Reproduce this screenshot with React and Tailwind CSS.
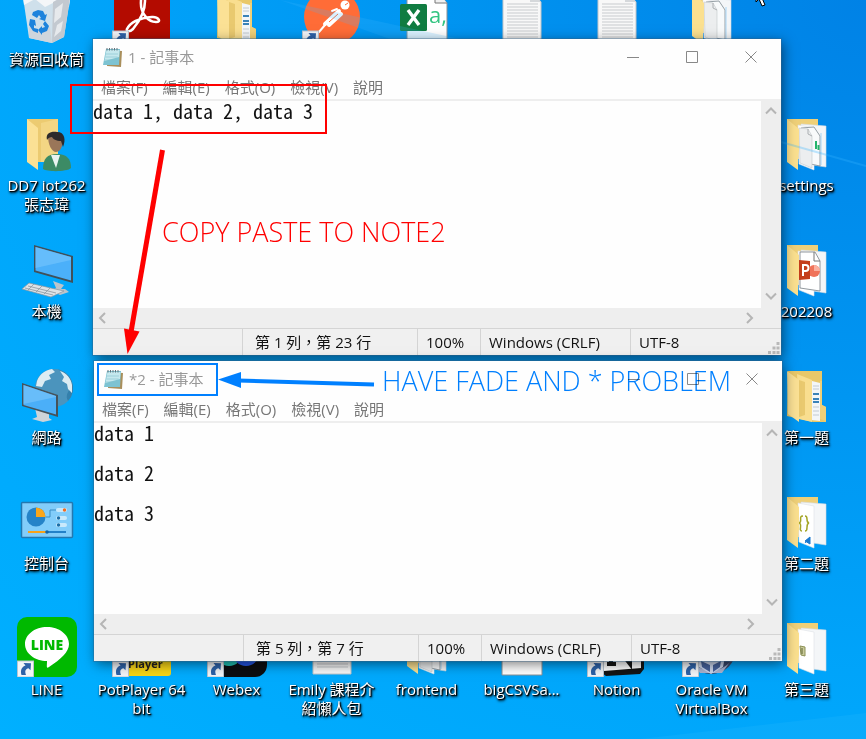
import React from "react";

const UI = "font-['Open_Sans','Noto_Sans_CJK_TC',sans-serif]";

/* ---------- desktop icon artwork, all on a 60 x 60 canvas ---------- */

function Shortcut() {
  return (
    <g>
      <rect x="0.5" y="44" width="16" height="16" fill="#f3f5f8" stroke="#b9c4d0" />
      <path d="M4.500 58c-1.500-5 .5-8.500 4-9.500l-2-2.500 7.500.3-.5 7-2-2c-3 .7-4 2.700-2.500 6.700z" fill="#2e62a8" />
    </g>
  );
}

function RecycleBin() {
  return (
    <g>
      <path d="M5 3 54 5 47 50 35 56 12 51z" fill="#dfe4ea" opacity=".93" />
      <path d="M5 3 54 5 52 20 40 14 28 20 18 12 7 18z" fill="#f4f6f8" />
      <path d="M36 15 35 56 47 50 54 5z" fill="#c3c9d0" />
      <path d="M38 22 46 16 44 30 37 36zM40 38 46 34 44 44 37 50z" fill="#e6e9ec" />
      <path d="M12 40 22 44 33 40 35 56 12 51z" fill="#cfd5dc" />
      <g fill="#1d83dc">
        <path d="M16 25l5-2 5 1 2 4 2-1-2 7-6-2 2-1-2-3-2 3-5-3z" />
        <path d="M13 32l5 1 1 6-2-1v3l4 1v4l-5-2-4-6z" />
        <path d="M28 34l4 5-2 5-5 2v2l-4-5 4-4v2l3-1-2-3z" />
      </g>
    </g>
  );
}

function Acrobat() {
  return (
    <g>
      <rect x="2" y="1" width="56" height="58" rx="4" fill="#b30b00" />
      <path d="M15 42c4-8 14-11 25-12 6-.5 10 5 4 5-8 0-16-9-15-21 0-5 4-5 4 0 0 11-7 22-12 28-3 3-7 3-6 0z" fill="none" stroke="#fff" strokeWidth="2.600" />
      <Shortcut />
    </g>
  );
}

function FolderFiled() {
  return (
    <g>
      <path d="M11 6h34v34l4 2v15H36L10 51z" fill="#e9c869" />
      <path d="M35 16l8 2v38l-9-1z" fill="#f3f6f8" />
      <path d="M36 21h6M36 24h6M36 42h6M36 46h6M36 50h6" stroke="#c2cad2" />
      <path d="M36 29h6M36 34h6M36 37h6" stroke="#3a82b8" strokeWidth="2" />
      <path d="M45 16v24l4 2v14l-6-2V16z" fill="#f0d078" />
      <path d="M20 9l15 6v42l-13-3z" fill="#f9de8f" />
      <path d="M22 15l6 2v33l-6 2z" fill="#e9c96f" />
      <path d="M10 6l12 9v42L11 49z" fill="#fbe195" />
    </g>
  );
}

function FolderOpen({ children }) {
  return (
    <g>
      <path d="M10 6h31v40H10z" fill="#efd078" />
      <path d="M24 11l25 2v41l-26-4z" fill="#f4f6f8" stroke="#d3dae1" strokeWidth=".6" />
      <path d="M21 12l16 3v42l-15-6z" fill="#fff" stroke="#dde1e5" strokeWidth=".6" />
      {children}
      <path d="M10 6l12 10v22l-1 5v14L10 49z" fill="#fbe08f" />
    </g>
  );
}

function FolderDocs({ green }) {
  return (
    <FolderOpen>
      <path d="M24 15l13-1 6 9v30l-19-4z" fill="#f8fafb" stroke="#7e8990" strokeWidth=".8" />
      <path d="M22 15l9 1 4 7v32l-12-5z" fill="#eceeef" stroke="#c9cdd0" strokeWidth=".7" />
      <path d="M31 16v5l4 2" fill="none" stroke="#abafb2" />
      <path d="M44 20v32" stroke="#a8d5f5" />
      {green && <path d="M39 28v8M41.500 32v5" stroke="#25b46b" strokeWidth="2" />}
    </FolderOpen>
  );
}

function Postman() {
  return (
    <g>
      <circle cx="30" cy="30" r="28" fill="#ff6c37" />
      <g fill="none" stroke="#fff" strokeLinecap="round">
        <circle cx="43" cy="18" r="4.500" fill="#fff" stroke="none" />
        <path d="M37 24 23 37M39 27 27 38" strokeWidth="4" />
        <path d="M23 38 17 45M35 22 30 24" strokeWidth="2" />
      </g>
      <path d="M36 27l-9 8M43 18l3-2" stroke="#ff6c37" />
      <Shortcut />
    </g>
  );
}

function BlankFile() {
  return (
    <g>
      <path d="M10 2h28l12 14v42H10z" fill="#fff" stroke="#8b9095" />
      <path d="M38 2v14h12" fill="#f1f1f1" stroke="#777" />
    </g>
  );
}

function CsvFile() {
  return (
    <g>
      <BlankFile />
      <rect x="3" y="17" width="27" height="27" rx="1.500" fill="#107c41" />
      <path d="M11 23l11 15M22 23 11 38" stroke="#fff" strokeWidth="3.400" />
      <text x="32" y="36" fontSize="22" fontFamily="Open Sans" fill="#33c481">a,</text>
    </g>
  );
}

const TEXT_LINES = [17, 20, 23, 26, 29, 32, 35, 38, 41, 44, 47, 50];

function TextFile() {
  return (
    <g>
      <path d="M11 2h27l11 13v42H11z" fill="#f8f8f8" stroke="#c2c6ca" />
      <path d="M38 2v13h11z" fill="#d5d8db" />
      {TEXT_LINES.map((y) => (
        <path key={y} d={`M15 ${y}h31`} stroke="#c8cbce" />
      ))}
    </g>
  );
}

function UserFolder() {
  return (
    <g>
      <path d="M10 6h31v43H10z" fill="#eccb71" />
      <path d="M24 10l17-4v43H24z" fill="#f3d684" />
      <path d="M10 6l11 9v42L10 49z" fill="#fbe195" />
      <path d="M26 56c0-10 4-15 14-15s14 5 14 14c-4 4-24 4-28 1z" fill="#3c8b65" />
      <path d="M34 42l5 13 4-13z" fill="#e9f3f0" />
      <path d="M31 23c0-5 15-6 15 2 0 9-3 14-7 14s-8-7-8-16z" fill="#9a7659" />
      <path d="M30 27c-2-8 6-9 10-8 8 0 9 8 6 15l-2-6c-5 0-8-2-9-4-2 0-4 1-5 3z" fill="#2c2a2c" />
    </g>
  );
}

function ThisPc() {
  return (
    <g>
      <path d="M36 42l11 4-3 4h4l4 3-9 3-8-4 4-3z" fill="#bcc4cb" />
      <path d="M17 6l39 11v27L17 33z" fill="#415059" />
      <path d="M18.500 8 54 18v23.500L18.500 31.500z" fill="#4bb0fa" />
      <path d="M18.500 8 54 18v3L18.500 29z" fill="#77c6fd" opacity=".6" />
      <path d="M12 44l35 8-13 6L5 50z" fill="#dde2e6" stroke="#8b959d" strokeWidth=".7" />
      <path d="M11 47l28 7M8 49l28 7M17 45l-6 6M25 47l-6 6M33 49l-6 6" stroke="#8d979f" strokeWidth=".8" />
    </g>
  );
}

function Network() {
  return (
    <g>
      <circle cx="37" cy="23" r="19" fill="#4b94bd" />
      <path d="M37 4a19 19 0 0 1 14 32c-3-5 0-11 4-13C53 11 47 5 37 4z" fill="#3480ac" />
      <path d="M20 16c3-8 9-11 15-12l3 3-6 3 2 4-6 2-3 6-6-1zM43 6c7 2 11 8 12 14v8l-4-4-1-5-5-3 2-4z" fill="#dcecf3" />
      <path d="M18 43l14 6v4l3 2-9 2-11-3 5-2z" fill="#ced4d9" />
      <path d="M5 18l36 12v22L5 41z" fill="#46525a" />
      <path d="M6.500 20 39 31v18.500L6.500 40z" fill="#4baff8" />
      <path d="M6.500 20 39 31v1L6.500 39z" fill="#7bc6fb" opacity=".6" />
    </g>
  );
}

function ControlPanel() {
  return (
    <g>
      <rect x="4.500" y="11.500" width="51" height="35" rx="1" fill="#82cdfa" stroke="#2378b0" strokeWidth="1.500" />
      <circle cx="19" cy="26" r="9.500" fill="#2583c8" />
      <path d="M19 26V16.500a9.500 9.500 0 0 1 9.500 9.500z" fill="#fba61a" />
      <path d="M29 26h4v-7h6" fill="none" stroke="#3b8dc4" />
      <rect x="39" y="17" width="11" height="4" rx="2" fill="#c9e9fb" />
      <rect x="39" y="25" width="11" height="4" rx="2" fill="#c9e9fb" />
      <rect x="39" y="32" width="11" height="4" rx="2" fill="#c9e9fb" />
      <circle cx="47.500" cy="19" r="1.700" fill="#f36c21" />
      <circle cx="41.500" cy="27" r="1.700" fill="#1d6fa8" />
      <circle cx="41.500" cy="34" r="1.700" fill="#1d6fa8" />
      <path d="M11 41h19" stroke="#f6a21b" strokeWidth="2" />
      <path d="M30 41h19" stroke="#2381c8" strokeWidth="2" />
      <circle cx="30" cy="41" r="1.800" fill="#1866a5" />
    </g>
  );
}

function Line() {
  return (
    <g>
      <rect width="60" height="60" rx="10" fill="#00b900" />
      <path d="M30 10c12 0 22 7.500 22 17 0 8-8 15-20 23-3 2-2-1-2-6-12 0-22-7.500-22-17s10-17 22-17z" fill="#fff" />
      <text x="30" y="33" textAnchor="middle" fontSize="14" fontWeight="800" fontFamily="Open Sans" fill="#00b900">LINE</text>
      <Shortcut />
    </g>
  );
}

function PotPlayer() {
  return (
    <g>
      <rect x="2" y="2" width="57" height="57" rx="3" fill="#f8d516" />
      <text x="16" y="51" fontSize="11" fontWeight="700" fontFamily="Open Sans" fill="#222">Player</text>
      <Shortcut />
    </g>
  );
}

function Webex() {
  return (
    <g>
      <rect width="60" height="60" rx="12" fill="#0c0d10" />
      <circle cx="22" cy="36" r="13" fill="#20c4b6" />
      <circle cx="39" cy="36" r="13" fill="#2456e8" />
      <Shortcut />
    </g>
  );
}

function Notion() {
  return (
    <g>
      <path d="M8 4h42l7 8v40l-4 5-34 2-11-8z" fill="#141414" />
      <path d="M14 14h40v37l-37 3z" fill="#fff" />
      <path d="M20 47h9M24 25v22M26 25l17 22V25M38 26h9" stroke="#141414" strokeWidth="4" />
      <Shortcut />
    </g>
  );
}

function VirtualBox() {
  return (
    <g>
      <circle cx="29" cy="32" r="25" fill="#39496d" />
      <path d="M10 45c10 11 29 11 38 0l-8 11H18z" fill="#a9b2cf" />
      <path d="M14 34l15 7 15-7-3 16-12 7-12-7z" fill="#cbd6ec" />
      <path d="M19 44l9 4v7l-8-5zM39 44l-8 4v7l7-5z" fill="#47639c" />
      <Shortcut />
    </g>
  );
}

function PowerPointFolder() {
  return (
    <FolderOpen>
      <path d="M23 13h15l5 9v30l-20-3z" fill="#fff" stroke="#777f85" strokeWidth=".8" />
      <path d="M37 13v9h6" fill="none" stroke="#777" />
      <circle cx="37" cy="32" r="6" fill="#f0735a" />
      <path d="M37 32v-6a6 6 0 0 1 6 6z" fill="#fbb09f" />
      <path d="M22 21l11 1v18l-11 1z" fill="#c43e1c" />
      <path d="M26 37V26h2.500a3 3 0 0 1 0 6H26" fill="none" stroke="#fff" strokeWidth="2" />
    </FolderOpen>
  );
}

function CodeFolder() {
  return (
    <FolderOpen>
      <path d="M26 25c-5 0 0 6-4 7 4 1-1 8 3 8M28 25c4 0 0 6 4 7-4 1 0 8-4 8" fill="none" stroke="#a5a627" strokeWidth="1.500" />
      <path d="M33 46v7l-5-3zM33 46l-5 6" fill="#1c7ad0" stroke="#1c7ad0" />
    </FolderOpen>
  );
}

function SheetFolder() {
  return (
    <FolderOpen>
      <path d="M23 29l5 1v9l-4-1z" fill="#c9ca9a" stroke="#8c9156" />
      <path d="M25 31v6" stroke="#5c6430" />
    </FolderOpen>
  );
}

/* ---------- desktop ---------- */

const COLUMNS = [
  [
    ["資源回收筒", RecycleBin],
    ["DD7 iot262\n張志瑋", UserFolder],
    ["本機", ThisPc],
    ["網路", Network],
    ["控制台", ControlPanel],
    ["LINE", Line],
  ],
  [["", Acrobat], ["PotPlayer 64\nbit", PotPlayer]],
  [["", FolderFiled], ["Webex", Webex]],
  [["", Postman], ["Emily 課程介\n紹懶人包", TextFile]],
  [["", CsvFile], ["frontend", FolderDocs]],
  [["", TextFile], ["bigCSVSa...", BlankFile]],
  [["", TextFile], ["Notion", Notion]],
  [["", FolderDocs], ["Oracle VM\nVirtualBox", VirtualBox]],
  [
    ["", null],
    ["settings", () => <FolderDocs green />],
    ["202208", PowerPointFolder],
    ["第一題", FolderFiled],
    ["第二題", CodeFolder],
    ["第三題", SheetFolder],
  ],
];

function DesktopItem({ label, Art }) {
  return (
    <button type="button" aria-label={label || "desktop item"} className="flex h-[126px] w-[95px] shrink-0 flex-col items-center">
      <svg viewBox="0 0 60 60" className="h-[60px] w-[60px] shrink-0">{Art && <Art />}</svg>
      <span className="mt-[3px] whitespace-pre text-center text-[15px] leading-[19px] text-white [text-shadow:1px_1px_1px_#000,1px_1px_2px_#000,1px_2px_3px_#000]">
        {label}
      </span>
    </button>
  );
}

/* ---------- notepad ---------- */

function NotepadIcon() {
  return (
    <svg viewBox="0 0 22 22" className="h-[22px] w-[22px]">
      <path d="M6 4 20 5 19 21 5 20z" fill="#a98f5c" />
      <path d="M4 3h14l-1 16H1z" fill="#7dc3d2" />
      <path d="M4.500 4h13l-.5 7-14.500 4z" fill="#c5e8ee" />
      <path d="M4 8h12M3.500 11h12M3 14h12" stroke="#84c0ce" strokeWidth=".6" />
      <path d="M5 2v2.500M7.500 2v2.500M10 2v2.500M12.500 2v2.500M15 2v2.500" stroke="#63727a" />
    </svg>
  );
}

const CHEVRONS = {
  up: "M1 8.500 6 3.500l5 5",
  down: "M1 3.500l5 5 5-5",
  left: "M8 1 3 6l5 5",
  right: "M4 1l5 5-5 5",
};

function Chevron({ dir }) {
  return (
    <button type="button" aria-label={dir} className="flex h-5 w-5 items-center justify-center">
      <svg viewBox="0 0 12 12" className="h-3 w-3">
        <path d={CHEVRONS[dir]} fill="none" stroke="#b5b5b5" strokeWidth="2" />
      </svg>
    </button>
  );
}

const MENUS = ["檔案(F)", "編輯(E)", "格式(O)", "檢視(V)", "說明"];

const CONTROLS = [
  ["minimize", "M0 6.500h12"],
  ["maximize", "M.5 .5h11v11H.5z"],
  ["close", "M.5 .5l11 11M11.500 .5l-11 11"],
];

function Notepad({ title, text, position, status, className }) {
  return (
    <section className={`absolute flex w-[688px] flex-col bg-[#fefefe] shadow-[0_0_0_1px_#36648a66,2px_3px_12px_#0008] ${className}`}>
      <header className="flex h-9 items-center pr-px">
        <div className="flex flex-1 items-center gap-1 pl-[9px] text-[15px] text-[#999]">
          <NotepadIcon />
          <h2 className="leading-[22px]">{title}</h2>
        </div>
        {CONTROLS.map(([name, d]) => (
          <button key={name} type="button" aria-label={name} className="flex h-9 w-[59px] items-center justify-center">
            <svg viewBox="0 0 12 12" className="h-3 w-3">
              <path d={d} fill="none" stroke="#888" />
            </svg>
          </button>
        ))}
      </header>
      <nav className="flex h-6 items-center gap-[15px] pl-2 text-[15px] text-[#777]">
        {MENUS.map((m) => (
          <button key={m} type="button">{m}</button>
        ))}
      </nav>
      <div className="flex border-t-2 border-[#eee]">
        <textarea
          aria-label={title}
          defaultValue={text}
          className={`flex-1 resize-none overflow-hidden whitespace-pre font-['Noto_Sans_Mono_CJK_TC','Liberation_Mono',monospace] text-[20px] font-light leading-5 text-[#111] outline-none ${position}`}
        />
        <div className="flex w-5 flex-col justify-between bg-[#eee] pb-[2px] pr-[2px]">
          <Chevron dir="up" />
          <Chevron dir="down" />
        </div>
      </div>
      <div className="flex justify-between bg-[#eee] pr-[22px]">
        <Chevron dir="left" />
        <Chevron dir="right" />
      </div>
      <footer className="relative flex h-[27px] items-stretch border-t border-[#d4d4d4] bg-[#f0f0f0] text-[15px] leading-[26px] text-[#111]">
        <span className="flex-1" />
        <span className="w-[175px] border-l border-[#d4d4d4] pl-3">{status}</span>
        <span className="w-[63px] border-l border-[#d4d4d4] pl-2">100%</span>
        <span className="w-[150px] border-l border-[#d4d4d4] pl-2">Windows (CRLF)</span>
        <span className="w-[151px] border-l border-[#d4d4d4] pl-2">UTF-8</span>
        <svg viewBox="0 0 12 12" className="absolute bottom-px right-px h-3 w-3" fill="#b9b9b9">
          <path d="M8.500 0h3v3h-3zM4.500 4.500h3v3h-3zM8.500 4.500h3v3h-3zM0 9h3v3H0zM4.500 9h3v3h-3zM8.500 9h3v3h-3z" />
        </svg>
      </footer>
    </section>
  );
}

export default function App() {
  return (
    <main
      className={`relative h-screen w-full overflow-hidden bg-[#00adff] ${UI} bg-[radial-gradient(ellipse_at_100%_0%,#0082e6_0%,#0096f2_38%,#00a6fb_68%,#00b0ff_100%)]`}
    >
      <svg aria-hidden="true" viewBox="0 0 866 739" className="absolute inset-0 h-full w-full">
        <path d="M781 142 866 166" stroke="#35b4ff" strokeWidth="2" opacity=".3" />
        <path d="M640 739 866 713V739z" fill="#38c0ff" opacity=".16" />
        <path d="M280 0 460 39H390z" fill="#40b8ff" opacity=".2" />
      </svg>

      <div className="-ml-px -mt-[13px] flex">
        {COLUMNS.map((items, c) => (
          <div key={c} className="flex h-[756px] flex-col justify-between">
            {items.map(([label, Art], i) => (
              <DesktopItem key={i} label={label} Art={Art} />
            ))}
          </div>
        ))}
      </div>

      <Notepad
        title="1 - 記事本"
        text="data 1, data 2, data 3"
        position="h-[207px]"
        status="第 1 列，第 23 行"
        className="left-[93px] top-[39px]"
      />
      <Notepad
        title="*2 - 記事本"
        text={"data 1\n\ndata 2\n\ndata 3"}
        position="h-[191px]"
        status="第 5 列，第 7 行"
        className="left-[94px] top-[361px]"
      />

      {/* annotations drawn over the windows */}
      <svg aria-hidden="true" width="866" height="739" className="pointer-events-none absolute left-0 top-0">
        <rect x="71" y="85" width="255" height="48" fill="none" stroke="#f00" strokeWidth="2" />
        <path d="M162.500 150 131 332" stroke="#f00" strokeWidth="5" />
        <path d="M124 328.500 139.500 331.500 127.500 354z" fill="#f00" />
        <rect x="98" y="364" width="119" height="31" fill="none" stroke="#0080ff" strokeWidth="2" />
        <path d="M374 384.500 238 380.500" stroke="#0080ff" strokeWidth="4" />
        <path d="M218 379.500 241 372v16z" fill="#0080ff" />
        <path d="M756-12V2l3-3 3 7 3-1-3-7h4z" fill="#fff" stroke="#000" />
      </svg>
      <p className="pointer-events-none absolute left-[162px] top-[214px] whitespace-nowrap text-[27px] font-light leading-9 text-[#f00]">
        COPY PASTE TO NOTE2
      </p>
      <p className="pointer-events-none absolute left-[382px] top-[363px] whitespace-nowrap text-[27px] font-light leading-9 text-[#0080ff] mix-blend-multiply">
        HAVE FADE AND * PROBLEM
      </p>
    </main>
  );
}
